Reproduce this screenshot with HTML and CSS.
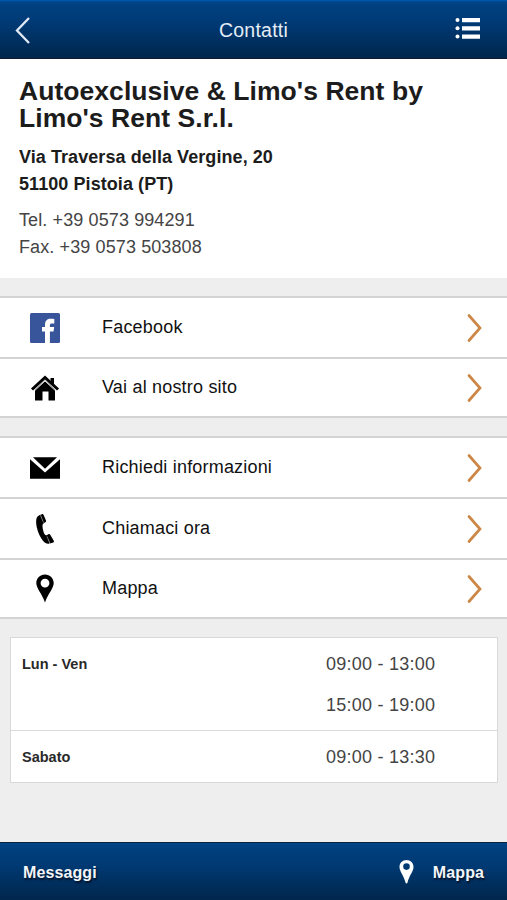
FILE: index.html
```html
<!DOCTYPE html>
<html lang="it">
<head>
<meta charset="utf-8">
<title>Contatti</title>
<link rel="stylesheet" href="styles.css">
</head>
<body>
<header class="topbar">
  <svg class="back" width="16" height="28" viewBox="0 0 16 28"><path d="M14 2 2 14.500 14 27"/></svg>
  <h1><span>Contatti</span></h1>
  <svg class="menu" width="26" height="24" viewBox="0 0 26 24"><circle cx="2.500" cy="3" r="2"/><circle cx="2.500" cy="11.300" r="2"/><circle cx="2.500" cy="19.500" r="2"/><path d="M7 1h18v4.300h-18zM7 9.200h18v4.300h-18zM7 17.400h18v4.300h-18z"/></svg>
</header>
<main>
  <section class="company">
    <h2><span>Autoexclusive &amp; Limo's Rent by</span><span>Limo's Rent S.r.l.</span></h2>
    <p class="address"><span>Via Traversa della Vergine, 20</span><br><span>51100 Pistoia (PT)</span></p>
    <p class="phones"><span>Tel. +39 0573 994291</span><br><span>Fax. +39 0573 503808</span></p>
  </section>
  <nav class="links">
    <a class="row">
      <svg class="icon" width="30" height="30" viewBox="0 0 30 30"><rect width="30" height="30" rx="1.500" fill="#38549a"/><path fill="#fff" d="M15 30V18.500h-3v-4.500H15v-2.500C15 7.500 17.500 5.700 20.500 5.700c1.500 0 2.800.1 3.800.3v4.500h-2.500c-1.400 0-1.900.6-1.900 1.700V14h4.300l-.7 4.500h-3.600V30z"/></svg>
      <span>Facebook</span>
      <svg class="arrow" width="16" height="30" viewBox="0 0 16 30"><path d="M2 2.500 13 15 2 27.500"/></svg>
    </a>
    <a class="row low">
      <svg class="icon" width="30" height="30" viewBox="0 0 30 30"><path d="M5 16.500 15 7.500 25 16.500v11h-6.500v-9h-6v9H5z"/><path d="M20.500 5h3.500v7.500l-3.500-3.200z"/><path d="M2 16.500 15 4.500l13 12" fill="none" stroke="#000" stroke-width="3"/><path d="M4 18.200 15 8 26 18.200" fill="none" stroke="#fff" stroke-width=".9"/></svg>
      <span>Vai al nostro sito</span>
      <svg class="arrow" width="16" height="30" viewBox="0 0 16 30"><path d="M2 2.500 13 15 2 27.500"/></svg>
    </a>
  </nav>
  <nav class="links">
    <a class="row">
      <svg class="icon" width="30" height="30" viewBox="0 0 30 30"><path d="M3 4.200h24L15 15.700zM0 6.200l15 13.200L30 6.200v19.600H0z"/></svg>
      <span>Richiedi informazioni</span>
      <svg class="arrow" width="16" height="30" viewBox="0 0 16 30"><path d="M2 2.500 13 15 2 27.500"/></svg>
    </a>
    <a class="row">
      <svg class="icon" width="30" height="30" viewBox="0 0 30 30"><path d="M10.300.8 8 2C5.700 4 5.800 9 7 14c1.300 6 4.800 12.500 8.500 15 1.200.8 2.500 1 4 .6l-2.600-8.400c-1 .4-1.700 0-2.300-1-1.200-2-2-5.300-2.100-8.100 0-1.400.3-2.400 1.300-2.900z"/><path d="m10.600.7 1.700-.7c.6 0 .9.300 1.200.8l2.500 5.600c.2.800 0 1.500-.7 1.900l-1.600.9zM16.700 21.200l2-1.100c.6-.2 1.100 0 1.400.5l3.700 6.200c.3.600.1 1.300-.4 1.700l-3.500 1z"/><path d="m10.800 2 2.600 6.500M16.900 22.500l2.800 6" fill="none" stroke="#aaa" stroke-width=".5"/></svg>
      <span>Chiamaci ora</span>
      <svg class="arrow" width="16" height="30" viewBox="0 0 16 30"><path d="M2 2.500 13 15 2 27.500"/></svg>
    </a>
    <a class="row low">
      <svg class="icon" width="30" height="30" viewBox="0 0 30 30"><path fill-rule="evenodd" d="M15 .5c-5 0-8.700 3.800-8.700 8.500 0 5.500 5.700 10.500 8.700 19.500 3-9 8.700-14 8.700-19.500C23.700 4.300 20 .5 15 .5zm0 4.200a4.400 4.400 0 1 1 0 8.800 4.400 4.400 0 0 1 0-8.800z"/></svg>
      <span>Mappa</span>
      <svg class="arrow" width="16" height="30" viewBox="0 0 16 30"><path d="M2 2.500 13 15 2 27.500"/></svg>
    </a>
  </nav>
  <dl class="hours">
    <div class="day"><dt>Lun - Ven</dt><dd>09:00 - 13:00</dd><dd>15:00 - 19:00</dd></div>
    <div class="day"><dt>Sabato</dt><dd>09:00 - 13:30</dd></div>
  </dl>
</main>
<footer class="bottombar">
  <a class="messages">Messaggi</a>
  <a class="map"><svg width="15" height="24" viewBox="0 0 15 24"><path fill-rule="evenodd" d="M7.500 0C3.400 0 .5 3.100.5 7c0 4.500 4.200 8.300 6 15.500.3 1.300 1.700 1.300 2 0 1.800-7.200 6-11 6-15.500 0-3.900-2.900-7-7-7zm0 3.300a3.300 3.300 0 1 1 0 6.600 3.300 3.300 0 0 1 0-6.600z"/></svg><span>Mappa</span></a>
</footer>
</body>
</html>
```
FILE: styles.css
```css
* { box-sizing: border-box; }
body {
  margin: 0;
  height: 900px;
  display: flex;
  flex-direction: column;
  background: #eee;
  color: #1c1c1c;
  font-family: "Liberation Sans", Arial, sans-serif;
  overflow: hidden;
}
h1, h2, p, dl, dd { margin: 0; }
svg { display: block; flex: none; }

.topbar {
  flex: none;
  height: 59px;
  padding: 0 26px 1px 15px;
  display: grid;
  grid-template-columns: 40px 1fr 26px;
  align-items: center;
  border-top: 1px solid #0057ae;
  border-bottom: 1px solid #101b30;
  background: linear-gradient(#004a91 0, #004080 4px, #003b77 20px, #00264c 100%);
  color: #e5edf7;
}
.topbar h1 {
  padding: 2px 3px 0 0;
  text-align: center;
  font-size: 19.500px;
  font-weight: 400;
  line-height: 24px;
  letter-spacing: .25px;
}
.back { margin-top: 1px; }
.back path { fill: none; stroke: #e2ebf5; stroke-width: 2.300; }
.menu { fill: #fff; }

main { flex: 1; }
.company { height: 219px; padding: 19px 19px 0; background: #fff; }
.company h2 { font-size: 26.500px; line-height: 27px; letter-spacing: .05px; white-space: nowrap; }
.company h2 span { display: block; height: 27px; }
.address { margin-top: 12px; font-size: 18px; font-weight: 700; line-height: 27px; letter-spacing: .07px; }
.phones { margin-top: 9px; font-size: 18px; line-height: 27px; letter-spacing: .11px; color: #444; }

.links {
  margin-top: 18px;
  border-top: 2px solid #d3d3d3;
  background: #fff;
}
.row {
  height: 61px;
  padding: 0 24px 0 30px;
  display: flex;
  align-items: center;
  border-bottom: 2px solid #d3d3d3;
  color: #111;
  font-size: 18px;
  letter-spacing: .19px;
}
.row.low { height: 59px; }
.icon { margin-right: 42px; }
.arrow { margin-left: auto; }
.arrow path { fill: none; stroke: #cc8746; stroke-width: 2.700; stroke-linecap: round; }

.hours {
  margin: 18px 9px 0 10px;
  border: 1px solid #d9d9d9;
  background: #fff;
}
.day {
  display: grid;
  grid-template-columns: 304px 1fr;
  padding: 6px 11px 4px;
}
.day + .day { border-top: 1px solid #d9d9d9; }
.day dt { font-size: 14.500px; font-weight: 700; line-height: 41px; color: #292929; }
.day dd { grid-column: 2; font-size: 18px; line-height: 41px; letter-spacing: .25px; color: #444; }

.bottombar {
  flex: none;
  height: 58px;
  padding: 2px 23px 0;
  display: flex;
  align-items: center;
  justify-content: space-between;
  border-top: 1px solid #0b2039;
  background: linear-gradient(#00458a 0, #003f7e 5px, #003a74 22px, #00264b 100%);
  color: #f2f5f9;
  font-size: 16px;
  font-weight: 700;
  letter-spacing: .1px;
  text-shadow: 1px 2px 2px #001025;
}
.map { display: flex; align-items: center; gap: 19px; }
.map svg { fill: #fff; margin-top: -2px; }
```
